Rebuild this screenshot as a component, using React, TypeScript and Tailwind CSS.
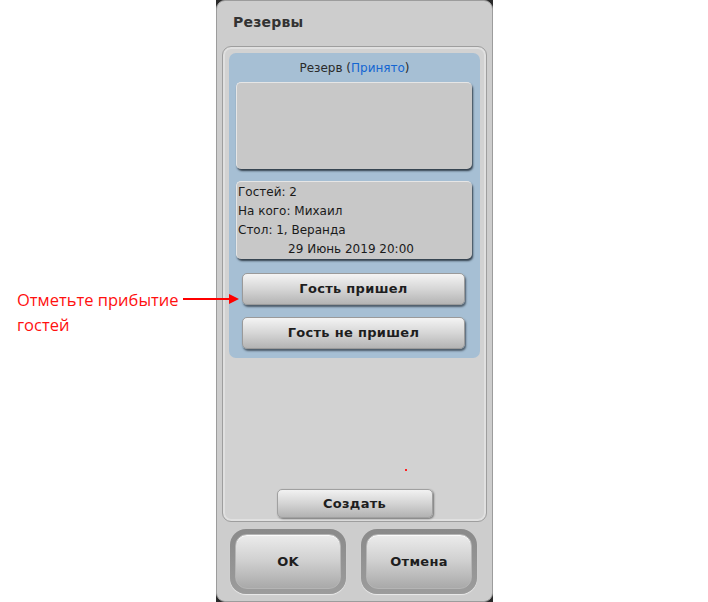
const ui = { fontFamily: '"DejaVu Sans", Verdana, sans-serif' };

const BlueButton = ({ label }: { label: string }) => (
  <button className="ml-[13px] mr-[15px] h-[32px] rounded-[5px] bg-gradient-to-b from-[#f4f4f4] via-[#d6d6d6] to-[#b4b4b4] border border-[#9a9a9a] shadow-[1px_2px_2px_rgba(40,50,60,0.7)] text-[13px] font-bold text-[#1e1e1e] tracking-[0.3px]">
    {label}
  </button>
);

const BigButton = ({ label }: { label: string }) => (
  <div className="w-[116px] h-[65px] rounded-[16px] bg-gradient-to-b from-[#8a8a8a] to-[#9c9c9c] p-[5px] shadow-[0_1px_1px_rgba(255,255,255,0.6)]">
    <button className="w-full h-full rounded-[12px] bg-gradient-to-b from-[#ececec] via-[#cfcfcf] to-[#a9a9a9] border border-[#b5b5b5] shadow-[inset_0_1px_0_rgba(255,255,255,0.8)] text-[13px] font-bold text-[#1e1e1e] tracking-[0.3px]">
      {label}
    </button>
  </div>
);

const App = () => {
  return (
    <div className="w-[708px] h-[602px] bg-white flex relative" style={ui}>
      {/* annotation */}
      <div className="w-[216px] pt-[287px] pl-[17px]">
        <p className="text-[16.5px] leading-[25px] text-[#ff1010]" style={{ fontFamily: '"Open Sans", "Noto Sans", sans-serif' }}>
          Отметьте прибытие
          <br />
          гостей
        </p>
      </div>
      <svg className="absolute left-[182px] top-[293px]" width="58" height="12" viewBox="0 0 58 12">
        <line x1="1" y1="6" x2="50" y2="6" stroke="#ff0000" strokeWidth="2" />
        <path d="M47 1 L57 6 L47 11 Z" fill="#ff0000" />
      </svg>

      {/* dialog */}
      <div className="w-[277px] h-[602px] bg-[#2a2a2a]">
        <div className="w-full h-full rounded-[9px] bg-[#cdcdcd] border border-[#9c9c9c] flex flex-col">
          <div className="h-[45px] pl-[16px] flex items-center">
            <span className="text-[14px] font-bold text-[#333] pb-[2px] tracking-[0.2px]">Резервы</span>
          </div>

          <div className="mx-[5px] h-[476px] rounded-[9px] border border-[#9e9e9e] bg-[#d2d2d2] shadow-[inset_0_0_0_2px_#e0e0e0] p-[6px] flex flex-col">
            <div className="h-[305px] rounded-[7px] bg-[#a6bfd4] flex flex-col">
              <div className="h-[29px] flex items-center justify-center text-[12px] text-[#2a2a2a]">
                Резерв (<span className="text-[#1466d2]">Принято</span>)
              </div>
              <div className="ml-[7px] mr-[8px] h-[87px] rounded-[5px] bg-[#c8c8c8] border-t border-l border-[#e6e6e6] shadow-[1px_2px_2px_rgba(20,30,40,0.8)]" />
              <div className="ml-[7px] mr-[8px] mt-[12px] h-[78px] rounded-[5px] bg-[#c8c8c8] border-t border-l border-[#e6e6e6] shadow-[1px_2px_2px_rgba(20,30,40,0.8)] pl-[1px] pt-[1px] text-[12px] leading-[19px] text-[#1a1a1a]">
                <div>Гостей: 2</div>
                <div>На кого: Михаил</div>
                <div>Стол: 1, Веранда</div>
                <div className="text-center pr-[8px]">29 Июнь 2019 20:00</div>
              </div>
              <div className="mt-[14px] flex flex-col gap-[12px]">
                <BlueButton label="Гость пришел" />
                <BlueButton label="Гость не пришел" />
              </div>
            </div>

            <div className="flex-1 relative">
              <span className="absolute left-[176px] top-[111px] w-[2px] h-[2px] bg-[#ff2020]" />
            </div>

            <div className="flex justify-center mb-[-3px]">
              <button className="w-[156px] h-[29px] rounded-[5px] bg-gradient-to-b from-[#f2f2f2] via-[#d4d4d4] to-[#b2b2b2] border border-[#a0a0a0] shadow-[1px_1px_2px_rgba(0,0,0,0.45)] text-[13px] font-bold text-[#1e1e1e] tracking-[0.3px]">
                Создать
              </button>
            </div>
          </div>

          <div className="mt-[7px] flex gap-[15px] pl-[13px]">
            <BigButton label="OK" />
            <BigButton label="Отмена" />
          </div>
        </div>
      </div>
    </div>
  );
};

export default App;
